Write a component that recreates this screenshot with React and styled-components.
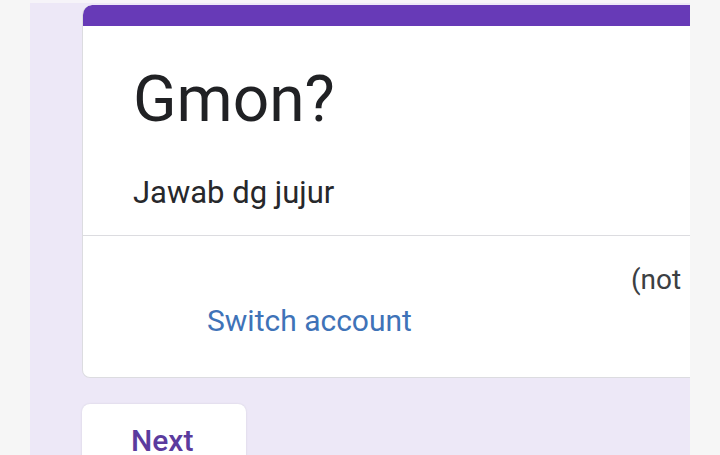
import React from "react";
import styled, { createGlobalStyle } from "styled-components";

const Global = createGlobalStyle`
  html, body { margin: 0; padding: 0; }
  body { font-family: Roboto, "Liberation Sans", sans-serif; background: #f6f6f6; }
`;

const Page = styled.div`
  display: flex;
  width: 720px;
  height: 455px;
  overflow: hidden;
  background: #f6f6f6;
`;

const Side = styled.div`
  width: 30px;
  flex: none;
  background: #f6f6f6;
`;

const Main = styled.main`
  flex: none;
  width: 608px;
  padding: 5px 0 0 52px;
  background: #ede8f7;
  border-top: 3px solid #f6f4f9;
  overflow: hidden;
  display: flex;
  flex-direction: column;
  gap: 26px;
`;

const Card = styled.section`
  flex: none;
  width: 680px;
  margin-top: -3px;
  background: #fff;
  border-radius: 10px 10px 8px 8px;
  border: 1px solid #dcdce0;
  border-top: none;
  overflow: hidden;
`;

const Accent = styled.div`
  height: 21px;
  margin: 0 -1px;
  background: #673ab7;
  border-radius: 10px 10px 0 0;
`;

const Header = styled.div`
  padding: 42px 0 27px 50px;
  border-bottom: 1px solid #dcdce0;
`;

const Title = styled.h1`
  margin: 0;
  font-size: 64px;
  line-height: 64px;
  font-weight: 400;
  color: #202124;
`;

const Description = styled.p`
  margin: 45px 0 0;
  font-size: 31px;
  line-height: 31px;
  color: #27282b;
`;

const Account = styled.div`
  padding: 26px 0 38px 50px;
  display: flex;
  flex-direction: column;
  gap: 5px;
`;

const AccountLine = styled.div`
  display: flex;
  white-space: nowrap;
  font-size: 28px;
  line-height: 36px;
  color: #3c4043;
`;

const Erased = styled.span`
  display: inline-block;
  width: 498px;
  flex: none;
`;

const SwitchLink = styled.a`
  align-self: flex-start;
  margin-left: 74px;
  font-size: 30px;
  line-height: 36px;
  color: #3f73b8;
  text-decoration: none;
`;

const NextButton = styled.button`
  width: 164px;
  height: 70px;
  flex: none;
  padding: 23px 0 0 49px;
  text-align: left;
  align-self: flex-start;
  display: flex;
  align-items: flex-start;
  background: #fff;
  border: none;
  border-radius: 8px;
  box-shadow: 0 0 2px rgba(60, 64, 67, 0.15);
  font-family: Roboto, "Liberation Sans", sans-serif;
  font-size: 30px;
  line-height: 28px;
  font-weight: 500;
  color: #5b3b9e;
`;

export default function App() {
  return (
    <>
      <Global />
      <Page>
        <Side />
        <Main>
          <Card>
            <Accent />
            <Header>
              <Title>Gmon?</Title>
              <Description>Jawab dg jujur</Description>
            </Header>
            <Account>
              <AccountLine>
                <Erased />
                <span>(not</span>
              </AccountLine>
              <SwitchLink href="#">Switch account</SwitchLink>
            </Account>
          </Card>
          <NextButton>Next</NextButton>
        </Main>
        <Side />
      </Page>
    </>
  );
}
